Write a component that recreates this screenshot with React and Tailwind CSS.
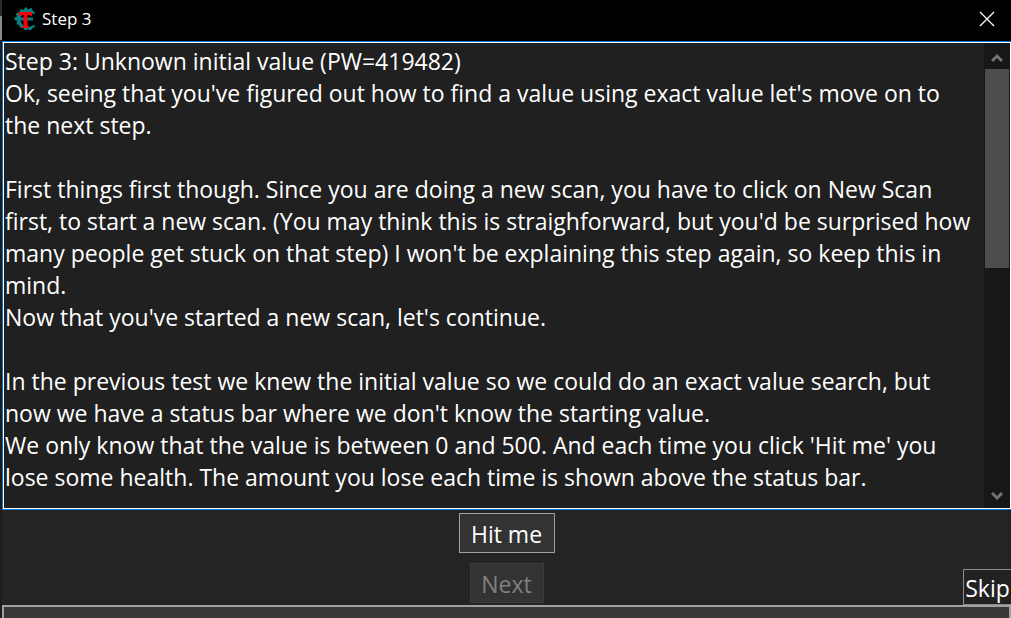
const paragraphs = [
  "Step 3: Unknown initial value (PW=419482)",
  "Ok, seeing that you've figured out how to find a value using exact value let's move on to the next step.",
  "",
  "First things first though. Since you are doing a new scan, you have to click on New Scan first, to start a new scan. (You may think this is straighforward, but you'd be surprised how many people get stuck on that step) I won't be explaining this step again, so keep this in mind.",
  "Now that you've started a new scan, let's continue.",
  "",
  "In the previous test we knew the initial value so we could do an exact value search, but now we have a status bar where we don't know the starting value.",
  "We only know that the value is between 0 and 500. And each time you click 'Hit me' you lose some health. The amount you lose each time is shown above the status bar.",
];

function AppIcon() {
  return (
    <svg viewBox="0 0 24 26" className="h-[26px] w-6 shrink-0" aria-hidden="true">
      <path
        d="M22 6.500L21 8.500L17 6.500L13 6.500L9.500 8.500L7.500 11.500H20V14.500H7.500L9 18L12 20.500L16 21L21 19L22.500 20.500L19 22.500L18.500 24H16L15 23L13 24.500L11 23.500L10.500 22L8 22L6.500 21L6.500 19L4 18.500L3.500 16.500L4.500 15L1.500 14V11.500L4 10.500L3 8L4.500 6.500L6.500 6.500L6.500 4L9 3L10.500 4.200L12 1.500L14 1.500L15 3.500L17.500 2L19 2.500L19.500 4.500Z"
        fill="#0b7d7d"
      />
      <path d="M6 6H19V10H18L17 9H14.500V20H15.500V22H9.500V20H10.500V9H8L7 10H6Z" fill="#fb0007" />
    </svg>
  );
}

function Chevron({ d }) {
  return (
    <svg viewBox="0 0 12 10" className="h-[10px] w-3" fill="none" stroke="#747474" strokeWidth="3" aria-hidden="true">
      <path d={d} />
    </svg>
  );
}

export default function App() {
  return (
    <div className="flex h-screen bg-[#242424] font-['Open_Sans','Noto_Sans',sans-serif] text-white">
      <div className="flex w-[2px] shrink-0 flex-col">
        <div className="h-4 bg-[#2b2b2b]" />
        <div className="h-6 bg-[#8a8a8a]" />
        <div className="flex-1 bg-[#1c1c1c]" />
      </div>
      <div className="flex min-w-0 flex-1 flex-col">
        <header className="flex h-[41px] shrink-0 items-center bg-black pr-4 pb-[3px] pl-[11px]">
          <AppIcon />
          <h1 className="ml-[5px] flex-1 text-[17px] leading-6">Step 3</h1>
          <button type="button" aria-label="Close" className="flex h-4 w-4 items-center justify-center">
            <svg viewBox="0 0 16 16" className="h-4 w-4" stroke="#fff" strokeWidth="1.300" aria-hidden="true">
              <path d="M1 1L15 15M15 1L1 15" />
            </svg>
          </button>
        </header>
        <main className="flex min-h-0 flex-1 border border-r-0 border-[#0078d7]">
          <div className="flex min-w-0 flex-1 border border-white bg-[#202020]">
            <textarea
              readOnly
              aria-label="Instructions"
              value={paragraphs.join("\n")}
              className="block min-w-0 flex-1 resize-none overflow-hidden py-[2px] pr-2 pl-px text-[23px] leading-8 outline-none"
            />
            <div className="flex w-[26px] shrink-0 flex-col items-center bg-[#171717] px-px">
              <button type="button" aria-label="Scroll up" className="flex h-[26px] w-full shrink-0 items-center justify-center pt-1">
                <Chevron d="M1 8L6 3L11 8" />
              </button>
              <div className="w-full flex-1">
                <div className="h-[199px] w-full bg-[#4d4d4d]" />
              </div>
              <button type="button" aria-label="Scroll down" className="flex h-[26px] w-full shrink-0 items-center justify-center pt-[2px]">
                <Chevron d="M1 2L6 7L11 2" />
              </button>
            </div>
          </div>
        </main>
        <footer className="shrink-0">
          <div className="grid grid-cols-[1fr_auto_1fr] items-end">
            <div />
            <div className="flex flex-col items-center gap-[10px] pt-[3px] pb-[2px]">
              <button type="button" className="h-10 w-24 border border-[#a0a0a0] bg-[#333] pt-[2px] text-[23px] leading-8">
                Hit me
              </button>
              <button type="button" disabled className="h-10 w-[74px] border border-[#3c3c3c] bg-[#333] pt-[2px] text-[23px] leading-8 text-[#808080]">
                Next
              </button>
            </div>
            <button type="button" className="h-9 w-12 justify-self-end border border-r-0 border-[#8c8c8c] bg-[#222] pt-[2px] text-[23px] leading-8">
              Skip
            </button>
          </div>
          <div role="progressbar" aria-label="Health" aria-valuenow={0} className="h-[13px] border-2 border-b-0 border-[#a0a0a0] bg-[#383838]" />
        </footer>
      </div>
    </div>
  );
}
